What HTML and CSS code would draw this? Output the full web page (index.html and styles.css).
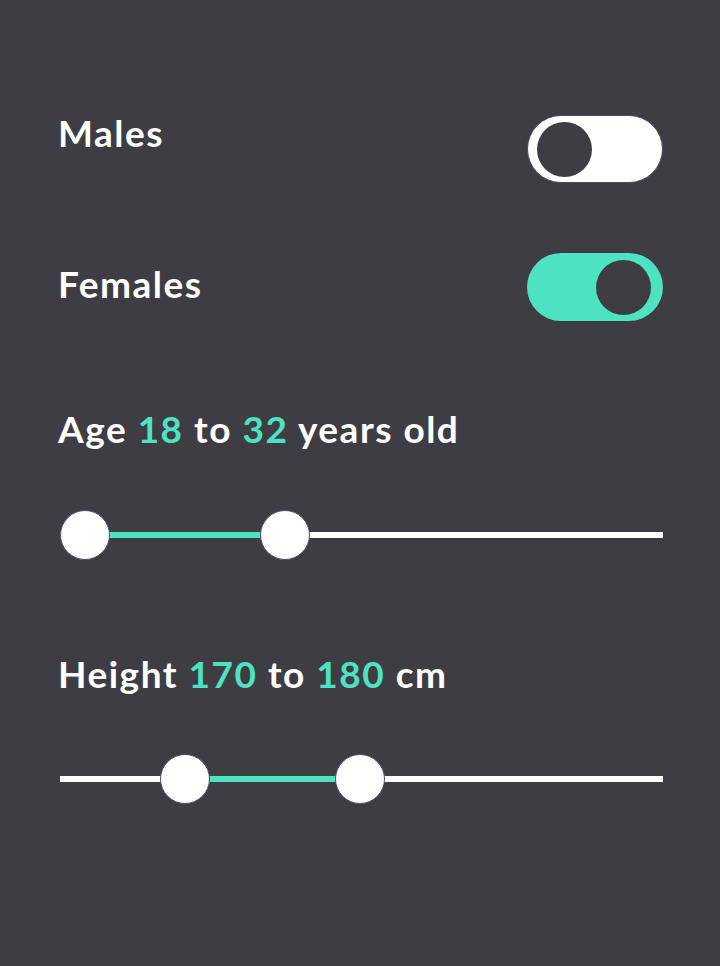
FILE: index.html
```html
<!DOCTYPE html>
<html lang="en">
<head>
<meta charset="utf-8">
<title>Filters</title>
<link rel="stylesheet" href="styles.css">
</head>
<body>
<main class="panel">
  <div class="row row-males">
    <span class="label">Males</span>
    <span class="toggle toggle-off"><span class="toggle-knob"></span></span>
  </div>
  <div class="row row-females">
    <span class="label">Females</span>
    <span class="toggle toggle-on"><span class="toggle-knob"></span></span>
  </div>

  <div class="label label-age">Age <span class="hl">18</span> to <span class="hl">32</span> years old</div>
  <div class="slider slider-age">
    <div class="track"></div>
    <div class="fill" style="left:25px; width:200px;"></div>
    <div class="knob" style="left:0px;"></div>
    <div class="knob" style="left:200px;"></div>
  </div>

  <div class="label label-height">Height <span class="hl">170</span> to <span class="hl">180</span> cm</div>
  <div class="slider slider-height">
    <div class="track"></div>
    <div class="fill" style="left:125px; width:175px;"></div>
    <div class="knob" style="left:100px;"></div>
    <div class="knob" style="left:275px;"></div>
  </div>
</main>
</body>
</html>
```
FILE: styles.css
```css
* { box-sizing: border-box; }
html, body {
  margin: 0;
  height: 100%;
  background: #3e3d43;
}
body {
  font-family: "Lato", "Open Sans", sans-serif;
  font-weight: 700;
  color: #ffffff;
}
.panel {
  padding: 111px 57px 0 58px;
}
.row {
  display: flex;
  justify-content: space-between;
  align-items: flex-start;
}
.label {
  font-size: 37px;
  line-height: 44px;
  letter-spacing: 1.5px;
  white-space: nowrap;
}
.hl { color: #4de3c2; }
.row-males .toggle { margin-top: 4px; }
.row-females { margin-top: 70px; }
.row-females .label { margin-top: 9px; }

.toggle {
  display: flex;
  align-items: center;
  width: 136px;
  height: 68px;
  border-radius: 34px;
  padding: 0 12px;
}
.toggle-off {
  background: #ffffff;
  border: 1.5px solid #4b4b6e;
  justify-content: flex-start;
  padding-left: 9px;
}
.toggle-on {
  background: #4de3c2;
  justify-content: flex-end;
}
.toggle-knob {
  width: 55px;
  height: 55px;
  border-radius: 50%;
  background: #3e3d43;
}

.label-age { margin-top: 86px; }
.label-height { margin-top: 92px; }

.slider {
  position: relative;
  height: 50px;
  width: 603px;
  margin-left: 2px;
}
.slider-age { margin-top: 59px; }
.slider-height { margin-top: 58px; }
.track, .fill {
  position: absolute;
  top: 22px;
  height: 6px;
}
.track {
  left: 0;
  right: 0;
  background: #ffffff;
}
.fill { background: #4de3c2; }
.knob {
  position: absolute;
  top: 0;
  width: 50px;
  height: 50px;
  border-radius: 50%;
  background: #ffffff;
  border: 1.5px solid #4b4b6e;
}
```
